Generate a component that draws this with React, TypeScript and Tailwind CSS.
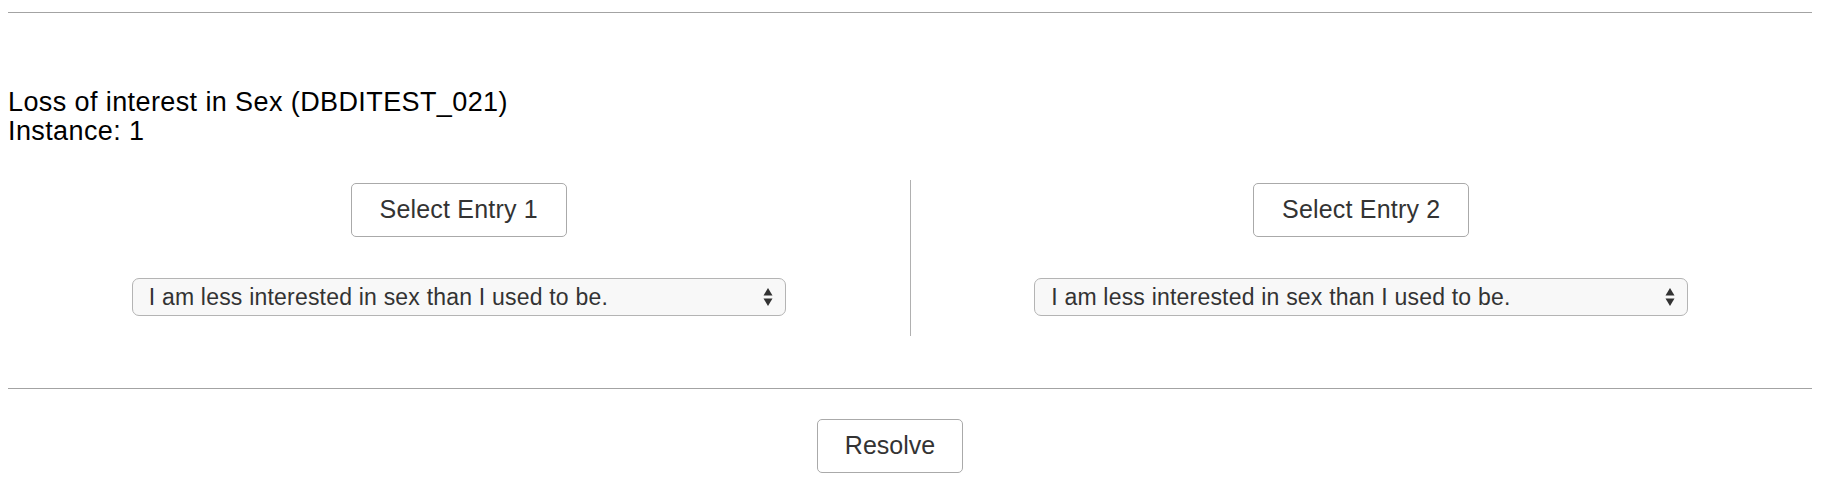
import React from 'react';

const Arrows: React.FC = () => (
  <svg width="10" height="20" viewBox="0 0 10 20" className="shrink-0">
    <path d="M5 1 L9.5 8.5 L0.5 8.5 Z" fill="#333" />
    <path d="M5 19 L9.5 11.5 L0.5 11.5 Z" fill="#333" />
  </svg>
);

const EntryColumn: React.FC<{ n: number }> = ({ n }) => (
  <div className="flex-1 flex flex-col items-center pt-[3px]">
    <button className="w-[216px] h-[54px] rounded-[5px] border border-[#aaaaaa] bg-white text-[25px] text-[#333] tracking-[0.2px]">
      Select Entry {n}
    </button>
    <div className="mt-[41px] w-[654px] h-[38px] rounded-[7px] border border-[#b4b4b4] bg-[#f8f8f8] flex items-center justify-between pl-[16px] pr-[12px]">
      <span className="text-[23px] text-[#333] tracking-[0.2px]">I am less interested in sex than I used to be.</span>
      <Arrows />
    </div>
  </div>
);

export default function App() {
  return (
    <div className="pl-2 pr-[14px] pt-3 font-['Liberation_Sans',Arial,sans-serif] bg-white min-h-[486px]">
      <div className="h-px bg-[#a3a3a3]" />

      <div className="mt-[75px] text-[27px] leading-[29px] tracking-[0.4px] text-black">
        <div>Loss of interest in Sex (DBDITEST_021)</div>
        <div>Instance: 1</div>
      </div>

      <div className="mt-[34px] flex h-[156px]">
        <EntryColumn n={1} />
        <div className="w-px bg-[#b0b0b0]" />
        <EntryColumn n={2} />
      </div>

      <div className="mt-[52px] h-px bg-[#a3a3a3]" />

      <div className="mt-[30px] flex justify-center pr-[40px]">
        <button className="w-[146px] h-[54px] rounded-[5px] border border-[#aaaaaa] bg-white text-[25px] text-[#333]">
          Resolve
        </button>
      </div>
    </div>
  );
}
